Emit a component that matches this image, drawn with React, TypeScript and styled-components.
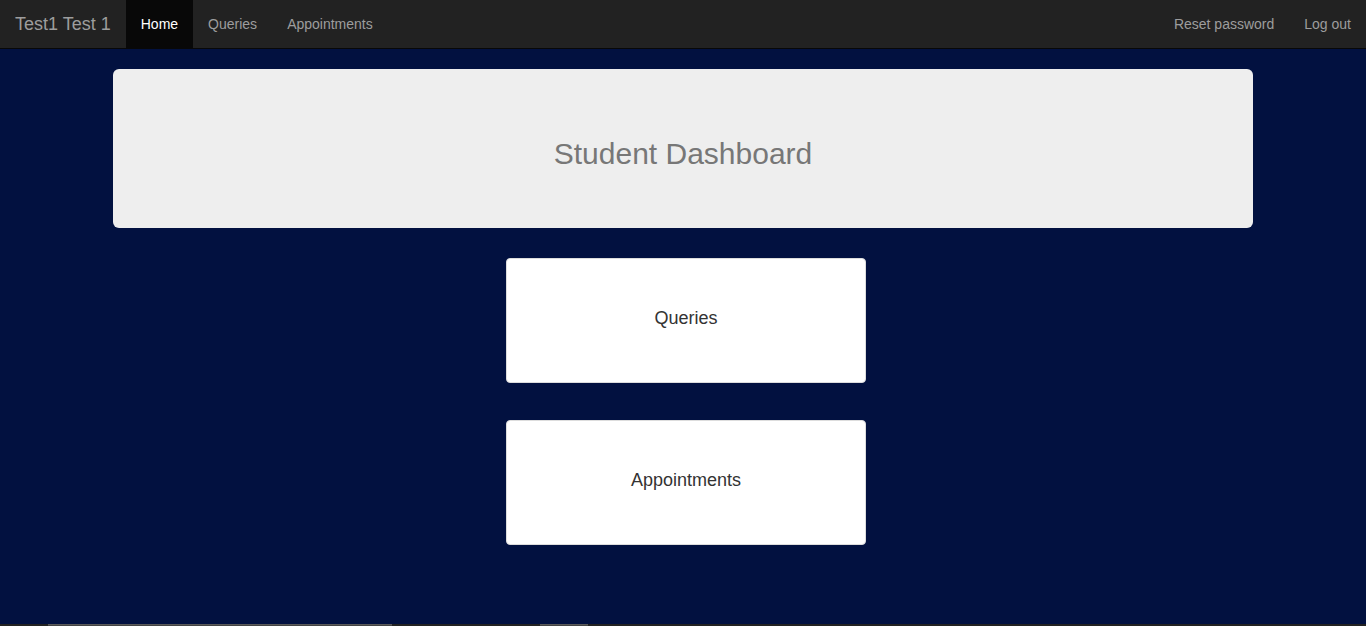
import styled, { createGlobalStyle } from "styled-components";

const GlobalStyle = createGlobalStyle`
  html, body {
    margin: 0;
    padding: 0;
    background: #021140;
    font-family: "Liberation Sans", Arial, sans-serif;
    font-size: 14px;
    color: #333;
  }
  * { box-sizing: border-box; }
`;

const Page = styled.div`
  display: flex;
  flex-direction: column;
`;

const Navbar = styled.nav`
  display: flex;
  align-items: stretch;
  justify-content: space-between;
  height: 49px;
  background: #222;
  border-bottom: 1px solid #080808;
`;

const NavGroup = styled.div`
  display: flex;
  align-items: stretch;
`;

const Brand = styled.a`
  display: flex;
  align-items: center;
  padding: 0 15px;
  font-size: 18px;
  color: #9d9d9d;
  text-decoration: none;
`;

const NavLink = styled.a<{ $active?: boolean }>`
  display: flex;
  align-items: center;
  padding: 0 15px;
  font-size: 14px;
  color: ${(p) => (p.$active ? "#fff" : "#9d9d9d")};
  background: ${(p) => (p.$active ? "#080808" : "transparent")};
  text-decoration: none;
`;

const Main = styled.main`
  min-height: 575px;
  width: 1170px;
  margin: 0 auto;
  padding: 20px 15px 0;
  display: flex;
  flex-direction: column;
  align-items: center;
`;

const Jumbotron = styled.div`
  width: 100%;
  height: 159px;
  background: #eee;
  border-radius: 6px;
  display: flex;
  align-items: center;
  justify-content: center;
`;

const Title = styled.h1`
  margin: 10px 0 0;
  font-size: 30px;
  font-weight: normal;
  color: #777;
`;

const CardList = styled.div`
  display: flex;
  flex-direction: column;
  gap: 37px;
  margin: 30px 0 0 6px;
`;

const Card = styled.a`
  width: 360px;
  height: 125px;
  background: #fff;
  border: 1px solid #ddd;
  border-radius: 4px;
  display: flex;
  align-items: center;
  justify-content: center;
  font-size: 18px;
  color: #333;
  text-decoration: none;
  padding-bottom: 4px;
`;

const Footer = styled.footer`
  height: 40px;
  background: #222;
  position: relative;
`;

const FooterBar = styled.div<{ $left: number; $width: number }>`
  position: absolute;
  top: 0;
  left: ${(p) => p.$left}px;
  width: ${(p) => p.$width}px;
  height: 30px;
  background: #444;
  border-top: 1px solid #5a5a5a;
`;

export default function App() {
  return (
    <Page>
      <GlobalStyle />
      <Navbar>
        <NavGroup>
          <Brand href="#">Test1 Test 1</Brand>
          <NavLink $active href="#">Home</NavLink>
          <NavLink href="#">Queries</NavLink>
          <NavLink href="#">Appointments</NavLink>
        </NavGroup>
        <NavGroup>
          <NavLink href="#">Reset password</NavLink>
          <NavLink href="#">Log out</NavLink>
        </NavGroup>
      </Navbar>
      <Main>
        <Jumbotron>
          <Title>Student Dashboard</Title>
        </Jumbotron>
        <CardList>
          <Card href="#">Queries</Card>
          <Card href="#">Appointments</Card>
        </CardList>
      </Main>
      <Footer>
        <FooterBar $left={48} $width={344} />
        <FooterBar $left={540} $width={48} />
      </Footer>
    </Page>
  );
}
